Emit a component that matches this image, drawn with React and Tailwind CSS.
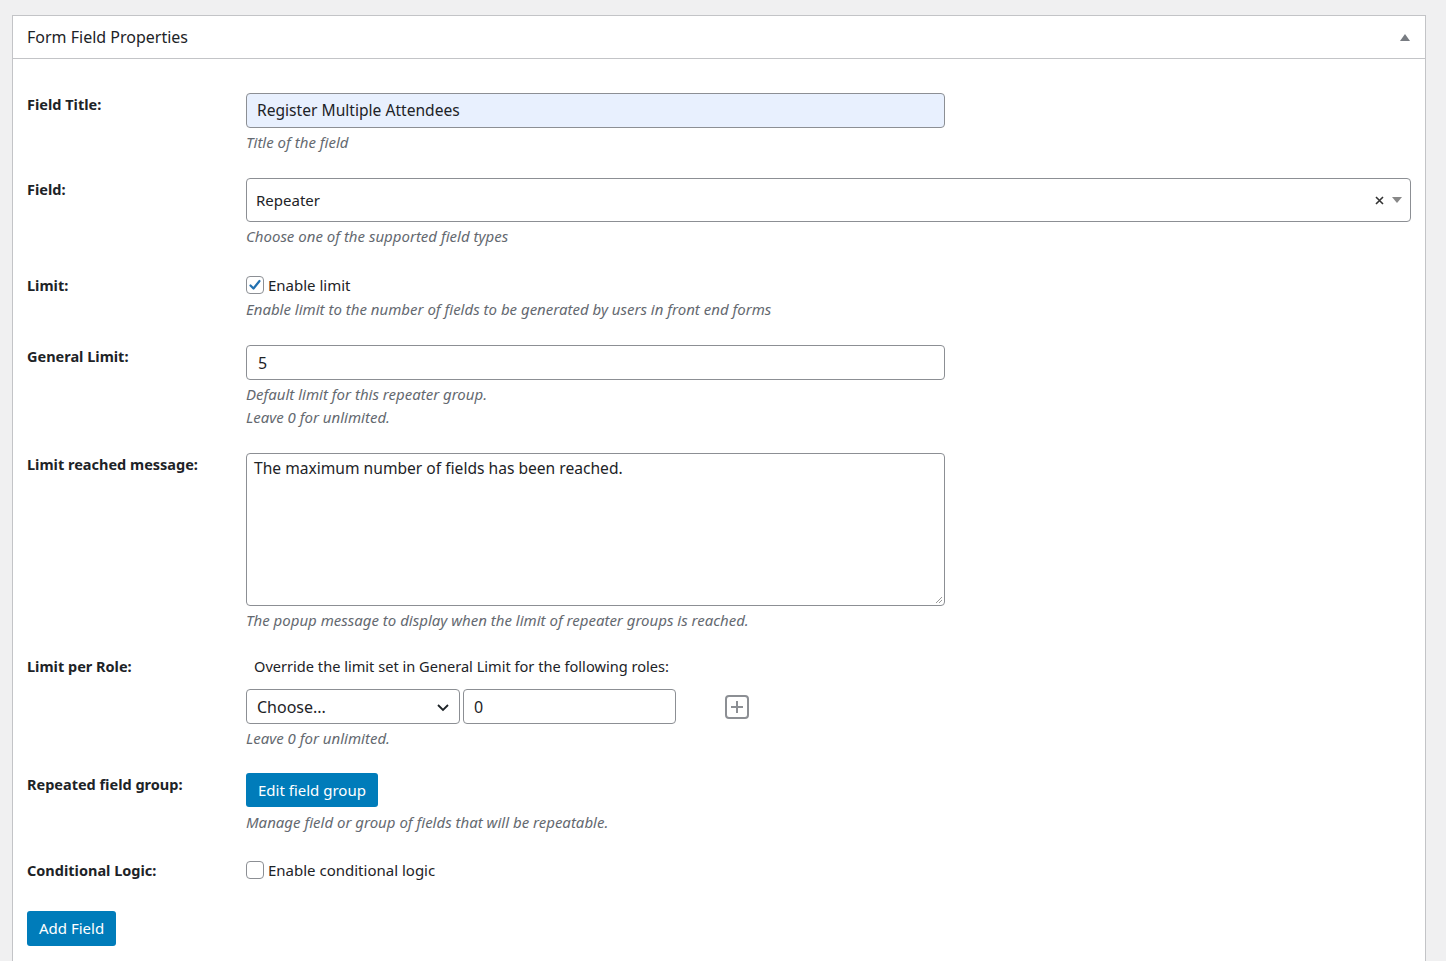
import React from 'react';

const font = { fontFamily: '"Noto Sans", "Open Sans", sans-serif' };

function Label({ children }) {
    return (
        <div className="w-[219px] shrink-0 pt-px text-[14.5px] leading-5 font-bold text-[#1d2327]">
            {children}
        </div>
    );
}

function Desc({ children, className = '' }) {
    return <p className={'text-[15px] leading-[23px] italic text-[#646970] ' + className}>{children}</p>;
}

export default function App() {
    return (
        <div className="min-h-[961px] bg-[#f0f0f1] pt-[15px] pl-[12px] pr-[20px]" style={font}>
            <div className="bg-white border border-[#c3c4c7] min-h-[950px]">
                <div className="flex items-center justify-between h-[43px] px-[14px] border-b border-[#c3c4c7]">
                    <h2 className="text-[16px] text-[#1d2327]">Form Field Properties</h2>
                    <span className="block w-0 h-0 mr-[1px] border-l-[5px] border-r-[5px] border-b-[7px] border-l-transparent border-r-transparent border-b-[#787c82]" />
                </div>

                <div className="px-[14px] pt-[34px] text-[#1d2327]">
                    {/* Field Title */}
                    <div className="flex items-start mb-[24px]">
                        <Label>Field Title:</Label>
                        <div>
                            <div className="w-[699px] h-[35px] flex items-center px-[10px] rounded-[4px] border border-[#8c8f94] bg-[#e8f0fe] text-[15.6px]">
                                Register Multiple Attendees
                            </div>
                            <Desc className="mt-[3px]">Title of the field</Desc>
                        </div>
                    </div>

                    {/* Field */}
                    <div className="flex items-start mb-[26px]">
                        <Label>Field:</Label>
                        <div className="flex-1">
                            <div className="h-[44px] flex items-center justify-between pl-[9px] pr-[8px] rounded-[4px] border border-[#8c8f94] bg-white text-[15px]">
                                <span>Repeater</span>
                                <span className="flex items-center gap-[8px] text-[#444]">
                                    <svg width="9" height="9" viewBox="0 0 9 9"><path d="M1 1L8 8M8 1L1 8" stroke="#333" strokeWidth="1.6" /></svg>
                                    <span className="block w-0 h-0 border-l-[5px] border-r-[5px] border-t-[6px] border-l-transparent border-r-transparent border-t-[#888]" />
                                </span>
                            </div>
                            <Desc className="mt-[3px]">Choose one of the supported field types</Desc>
                        </div>
                    </div>

                    {/* Limit */}
                    <div className="flex items-start mb-[24px]">
                        <Label>Limit:</Label>
                        <div>
                            <label className="flex items-center gap-[4px] text-[15px] leading-[22px]">
                                <span className="flex items-center justify-center w-[18px] h-[18px] rounded-[4px] border border-[#8c8f94] bg-white">
                                    <svg width="14" height="14" viewBox="0 0 14 14"><path d="M2.5 7.5L5.5 10.5L11.5 3" fill="none" stroke="#2271b1" strokeWidth="2.2" strokeLinecap="round" strokeLinejoin="round" /></svg>
                                </span>
                                Enable limit
                            </label>
                            <Desc className="mt-[2px]">Enable limit to the number of fields to be generated by users in front end forms</Desc>
                        </div>
                    </div>

                    {/* General Limit */}
                    <div className="flex items-start mb-[24px]">
                        <Label>General Limit:</Label>
                        <div>
                            <div className="w-[699px] h-[35px] flex items-center px-[11px] rounded-[4px] border border-[#8c8f94] bg-white text-[16px]">5</div>
                            <Desc className="mt-[3px]">Default limit for this repeater group.</Desc>
                            <Desc>Leave 0 for unlimited.</Desc>
                        </div>
                    </div>

                    {/* Limit reached message */}
                    <div className="flex items-start mb-[23px]">
                        <Label>Limit reached message:</Label>
                        <div>
                            <div className="relative w-[699px] h-[153px] px-[7px] pt-[3px] rounded-[4px] border border-[#8c8f94] bg-white text-[15.6px]">
                                The maximum number of fields has been reached.
                                <svg className="absolute right-[1px] bottom-[1px]" width="8" height="8" viewBox="0 0 8 8"><path d="M7 1L1 7M7 4L4 7" stroke="#999" strokeWidth="1" /></svg>
                            </div>
                            <Desc className="mt-[3px]">The popup message to display when the limit of repeater groups is reached.</Desc>
                        </div>
                    </div>

                    {/* Limit per Role */}
                    <div className="flex items-start mb-[23px]">
                        <Label>Limit per Role:</Label>
                        <div>
                            <p className="pl-[8px] text-[14.6px] leading-[22px]">Override the limit set in General Limit for the following roles:</p>
                            <div className="flex items-center mt-[12px]">
                                <div className="w-[214px] h-[35px] flex items-center justify-between pl-[10px] pr-[9px] rounded-[4px] border border-[#8c8f94] bg-white text-[16px]">
                                    <span>Choose...</span>
                                    <svg width="14" height="14" viewBox="0 0 14 14"><path d="M2 5L7 10L12 5" fill="none" stroke="#1d2327" strokeWidth="1.8" /></svg>
                                </div>
                                <div className="w-[213px] h-[35px] ml-[3px] flex items-center px-[10px] rounded-[4px] border border-[#8c8f94] bg-white text-[16px]">0</div>
                                <svg className="ml-[49px]" width="25" height="24" viewBox="0 0 25 24">
                                    <rect x="1" y="1" width="22" height="22" rx="3" fill="none" stroke="#8c8f94" strokeWidth="2" />
                                    <path d="M12 6V18M6 12H18" stroke="#8c8f94" strokeWidth="2" />
                                </svg>
                            </div>
                            <Desc className="mt-[3px]">Leave 0 for unlimited.</Desc>
                        </div>
                    </div>

                    {/* Repeated field group */}
                    <div className="flex items-start mb-[25px]">
                        <Label>Repeated field group:</Label>
                        <div>
                            <button className="h-[34px] px-[12px] rounded-[3px] bg-[#007cba] text-white text-[15px]">Edit field group</button>
                            <Desc className="mt-[4px]">Manage field or group of fields that will be repeatable.</Desc>
                        </div>
                    </div>

                    {/* Conditional Logic */}
                    <div className="flex items-start mb-[30px]">
                        <Label>Conditional Logic:</Label>
                        <label className="flex items-center gap-[4px] text-[15px] leading-[22px]">
                            <span className="w-[18px] h-[18px] rounded-[4px] border border-[#8c8f94] bg-white" />
                            Enable conditional logic
                        </label>
                    </div>

                    <button className="h-[35px] px-[12px] rounded-[3px] bg-[#007cba] text-white text-[15px]">Add Field</button>
                </div>
            </div>
        </div>
    );
}
